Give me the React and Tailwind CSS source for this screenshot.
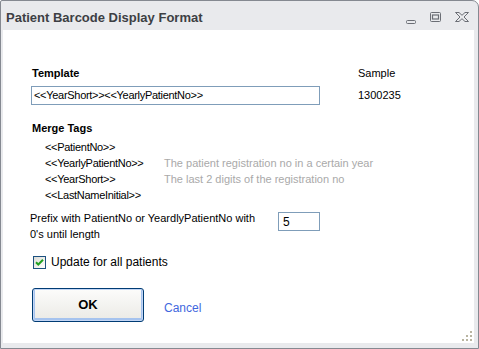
import React from "react";

const font = { fontFamily: '"Liberation Sans", Arial, sans-serif' };

function TitleIcons() {
  return (
    <div className="flex items-center mt-[3px]">
      <svg width="12" height="8" viewBox="0 0 12 8" className="mr-[12px] mt-[8px]">
        <rect x="1.5" y="3.5" width="9" height="3" rx="1" fill="none" stroke="#6b6e75" strokeWidth="1" />
      </svg>
      <svg width="13" height="12" viewBox="0 0 13 12" className="mr-[12px]">
        <rect x="1.5" y="1.5" width="10" height="9" rx="1" fill="none" stroke="#6b6e75" strokeWidth="1" />
        <rect x="3.5" y="4" width="6" height="4" fill="none" stroke="#6b6e75" strokeWidth="1.2" />
      </svg>
      <svg width="16" height="12" viewBox="0 0 16 12">
        <path
          d="M1.5 1.5 H5 L8 4.3 L11 1.5 H14.5 L10 6 L14.5 10.5 H11 L8 7.7 L5 10.5 H1.5 L6 6 Z"
          fill="none"
          stroke="#6b6e75"
          strokeWidth="1"
          strokeLinejoin="round"
        />
      </svg>
    </div>
  );
}

function Grip() {
  const dots = [
    [8, 0],
    [4, 4],
    [8, 4],
    [0, 8],
    [4, 8],
    [8, 8],
  ];
  return (
    <svg width="10" height="10" viewBox="0 0 10 10" className="absolute right-[2px] bottom-[2px]">
      {dots.map(([x, y], i) => (
        <rect key={i} x={x} y={y} width="2" height="2" fill="#b9b5a1" />
      ))}
    </svg>
  );
}

export default function App() {
  const tags = [
    ["<<PatientNo>>", ""],
    ["<<YearlyPatientNo>>", "The patient registration no in a certain year"],
    ["<<YearShort>>", "The last 2 digits of the registration no"],
    ["<<LastNameInitial>>", ""],
  ];
  return (
    <div
      className="w-[479px] h-[349px] bg-[#e9eaed] border border-[#858991] rounded-tr-[7px] rounded-tl-[2px] flex flex-col overflow-hidden"
      style={font}
    >
      <div className="h-[29px] flex items-center justify-between pl-[5px] pr-[8px] shrink-0">
        <span className="text-[13px] font-bold text-[#3d3f44] leading-[14px] mt-[4px]">
          Patient Barcode Display Format
        </span>
        <TitleIcons />
      </div>
      <div className="relative ml-[2px] mr-[4px] h-[313px] bg-white pl-[28px] text-black">
        <div className="flex mt-[37px] h-[13px] leading-[13px]">
          <span className="w-[327px] pl-[1px] text-[11px] font-bold">Template</span>
          <span className="text-[11px]">Sample</span>
        </div>
        <div className="flex items-center mt-[6px]">
          <div className="w-[289px] h-[19px] border border-[#7f9db9] pl-[2px] flex items-center text-[11px] tracking-[-0.3px]">
            {"<<YearShort>><<YearlyPatientNo>>"}
          </div>
          <span className="ml-[38px] text-[11px]">1300235</span>
        </div>
        <div className="mt-[17px] h-[13px] leading-[13px] pl-[1px] text-[11px] font-bold">Merge Tags</div>
        <div className="mt-[4px] pl-[14px]">
          {tags.map(([t, d]) => (
            <div key={t} className="flex h-[16px] leading-[16px] text-[11px]">
              <span className="w-[119px] tracking-[-0.3px]">{t}</span>
              <span className="text-[#a9a9a9]">{d}</span>
            </div>
          ))}
        </div>
        <div className="flex mt-[7px]">
          <div className="w-[248px] -ml-[1px] text-[11px] leading-[16px]">
            Prefix with PatientNo or YeardlyPatientNo with
            <br />
            0's until length
          </div>
          <div className="mt-[2px] w-[42px] h-[19px] border border-[#7f9db9] pl-[4px] flex items-center text-[12px]">
            5
          </div>
        </div>
        <div className="flex items-center mt-[12px] h-[16px] pl-[2px]">
          <div className="w-[13px] h-[13px] border border-[#1c5180] bg-gradient-to-br from-[#dcdcd6] to-white flex items-center justify-center">
            <svg width="9" height="9" viewBox="0 0 9 9">
              <path d="M1 4.2 L3.3 6.5 L8 1.8" fill="none" stroke="#21a121" strokeWidth="2" />
            </svg>
          </div>
          <span className="ml-[5px] text-[12px]">Update for all patients</span>
        </div>
        <div className="flex items-center mt-[18px] pl-[1px]">
          <button className="w-[112px] h-[34px] rounded-[3px] border border-[#003c74] bg-gradient-to-b from-[#fcfcfb] to-[#ebeae5] shadow-[inset_0_0_0_1px_#c3d6f5,inset_0_-1px_0_2px_#a6c3ee] text-[13px] font-bold text-black flex items-center justify-center">
            OK
          </button>
          <span className="ml-[20px] text-[12px] text-[#3f68de] mt-[6px]">Cancel</span>
        </div>
        <Grip />
      </div>
    </div>
  );
}
